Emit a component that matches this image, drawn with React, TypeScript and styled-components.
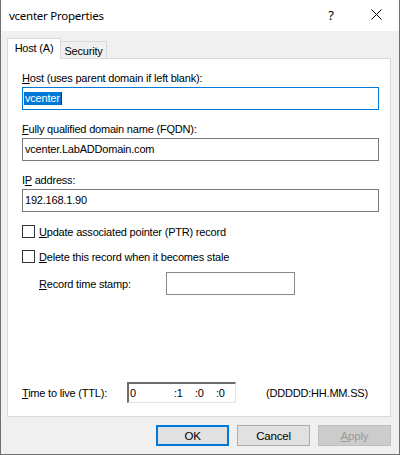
import React from 'react';
import styled, { createGlobalStyle } from 'styled-components';

const GlobalStyle = createGlobalStyle`
  html, body {
    margin: 0;
    padding: 0;
    background: #ffffff;
  }
  * {
    box-sizing: border-box;
  }
`;

const Window = styled.div`
  width: 400px;
  height: 455px;
  display: flex;
  flex-direction: column;
  border: 1px solid #707070;
  border-top: none;
  background: #f0f0f0;
  font-family: 'Liberation Sans', Arial, sans-serif;
  font-size: 11px;
  letter-spacing: -0.2px;
  color: #000;
`;

const TitleBar = styled.div`
  height: 31px;
  flex: none;
  display: flex;
  align-items: center;
  background: #ffffff;
  padding-left: 8px;
`;

const Title = styled.div`
  flex: 1;
  font-family: 'Noto Sans', 'Open Sans', sans-serif;
  font-size: 11.5px;
  letter-spacing: -0.25px;
  padding-bottom: 1px;
`;

const HelpButton = styled.div`
  width: 44px;
  text-align: center;
  font-family: 'Noto Sans', sans-serif;
  font-size: 13px;
  padding-bottom: 2px;
`;

const CloseButton = styled.div`
  width: 46px;
  height: 31px;
  display: flex;
  align-items: center;
  justify-content: center;
  padding-bottom: 2px;
`;

const Body = styled.div`
  flex: 1;
  display: flex;
  flex-direction: column;
  padding: 7px 8px 0 6px;
`;

const TabStrip = styled.div`
  height: 20px;
  display: flex;
  align-items: flex-end;
`;

const Tab = styled.div<{ $active?: boolean }>`
  position: relative;
  z-index: ${({ $active }) => ($active ? 1 : 0)};
  height: ${({ $active }) => ($active ? '21px' : '17px')};
  width: ${({ $active }) => ($active ? '54px' : '47px')};
  margin-left: ${({ $active }) => ($active ? '0' : '-1px')};
  margin-bottom: ${({ $active }) => ($active ? '-1px' : '0')};
  background: ${({ $active }) => ($active ? '#ffffff' : '#f0f0f0')};
  border: 1px solid #d9d9d9;
  border-bottom: none;
  display: flex;
  justify-content: center;
  padding-top: 3px;
  line-height: 13px;
`;

const Panel = styled.div`
  height: 359px;
  background: #ffffff;
  border: 1px solid #d9d9d9;
  display: flex;
  flex-direction: column;
  padding: 13px 11px 13px 14px;
`;

const Label = styled.div`
  line-height: 13px;
  margin-bottom: 2px;
`;

const Key = styled.span`
  text-decoration: underline;
  text-underline-offset: 1px;
`;

const TextBox = styled.div<{ $focused?: boolean }>`
  height: 23px;
  width: 100%;
  border: 1px solid ${({ $focused }) => ($focused ? '#0078d7' : '#7a7a7a')};
  background: #ffffff;
  display: flex;
  align-items: center;
  padding-left: 2px;
  line-height: 13px;
  margin-bottom: 13px;
`;

const Selected = styled.span`
  display: inline-block;
  background: #0078d7;
  color: #ffffff;
  line-height: 13px;
  padding: 0 1px 0 1px;
  margin-left: -1px;
  border-right: 1px solid #3a2a10;
`;

const CheckRow = styled.div`
  display: flex;
  align-items: center;
  height: 13px;
  margin-bottom: 12px;
`;

const CheckBox = styled.div`
  width: 13px;
  height: 13px;
  border: 1px solid #333333;
  background: #ffffff;
  margin-right: 4px;
`;

const StampRow = styled.div`
  display: flex;
  align-items: center;
  margin-top: -3px;
  padding-left: 17px;
`;

const StampLabel = styled.div`
  width: 127px;
  padding-top: 1px;
`;

const StampBox = styled.div`
  width: 129px;
  height: 23px;
  border: 1px solid #8a8a8a;
  background: #ffffff;
`;

const TtlRow = styled.div`
  margin-top: auto;
  display: flex;
  align-items: center;
`;

const TtlLabel = styled.div`
  width: 105px;
  padding-top: 1px;
`;

const TtlBox = styled.div`
  width: 109px;
  height: 21px;
  border-top: 2px solid #6d6d6d;
  border-left: 2px solid #6d6d6d;
  border-right: 1px solid #e3e3e3;
  border-bottom: 1px solid #e3e3e3;
  display: flex;
  align-items: center;
  padding-left: 1px;
  line-height: 13px;
`;

const TtlPart = styled.span<{ $w: number }>`
  width: ${({ $w }) => $w}px;
`;

const TtlFormat = styled.div`
  margin-left: 30px;
  padding-top: 1px;
`;

const ButtonRow = styled.div`
  display: flex;
  justify-content: flex-end;
  gap: 8px;
  margin-top: 8px;
`;

const Button = styled.div<{ $default?: boolean; $disabled?: boolean }>`
  width: 73px;
  height: 21px;
  display: flex;
  align-items: center;
  justify-content: center;
  background: ${({ $disabled }) => ($disabled ? '#cccccc' : '#e1e1e1')};
  border: ${({ $default, $disabled }) =>
    $default ? '2px solid #0078d7' : $disabled ? '1px solid #bfbfbf' : '1px solid #adadad'};
  color: ${({ $disabled }) => ($disabled ? '#9a9a9a' : '#000')};
  font-size: 11.5px;
`;

const CloseIcon = () => (
  <svg width="11" height="11" viewBox="0 0 11 11">
    <path d="M0.5 0.5 L10.5 10.5 M10.5 0.5 L0.5 10.5" stroke="#000" strokeWidth="1" fill="none" />
  </svg>
);

const App: React.FC = () => {
  return (
    <>
      <GlobalStyle />
      <Window>
        <TitleBar>
          <Title>vcenter Properties</Title>
          <HelpButton>?</HelpButton>
          <CloseButton>
            <CloseIcon />
          </CloseButton>
        </TitleBar>
        <Body>
          <TabStrip>
            <Tab $active>Host (A)</Tab>
            <Tab>Security</Tab>
          </TabStrip>
          <Panel>
            <Label>
              <Key>H</Key>ost (uses parent domain if left blank):
            </Label>
            <TextBox $focused>
              <Selected>vcenter</Selected>
            </TextBox>
            <Label>
              <Key>F</Key>ully qualified domain name (FQDN):
            </Label>
            <TextBox>vcenter.LabADDomain.com</TextBox>
            <Label>
              I<Key>P</Key> address:
            </Label>
            <TextBox>192.168.1.90</TextBox>
            <CheckRow>
              <CheckBox />
              <span>
                <Key>U</Key>pdate associated pointer (PTR) record
              </span>
            </CheckRow>
            <CheckRow>
              <CheckBox />
              <span>
                <Key>D</Key>elete this record when it becomes stale
              </span>
            </CheckRow>
            <StampRow>
              <StampLabel>
                <Key>R</Key>ecord time stamp:
              </StampLabel>
              <StampBox />
            </StampRow>
            <TtlRow>
              <TtlLabel>
                <Key>T</Key>ime to live (TTL):
              </TtlLabel>
              <TtlBox>
                <TtlPart $w={44}>0</TtlPart>
                <TtlPart $w={21}>:1</TtlPart>
                <TtlPart $w={21}>:0</TtlPart>
                <TtlPart $w={15}>:0</TtlPart>
              </TtlBox>
              <TtlFormat>(DDDDD:HH.MM.SS)</TtlFormat>
            </TtlRow>
          </Panel>
          <ButtonRow>
            <Button $default>OK</Button>
            <Button>Cancel</Button>
            <Button $disabled>
              <span>
                <Key>A</Key>pply
              </span>
            </Button>
          </ButtonRow>
        </Body>
      </Window>
    </>
  );
};

export default App;
